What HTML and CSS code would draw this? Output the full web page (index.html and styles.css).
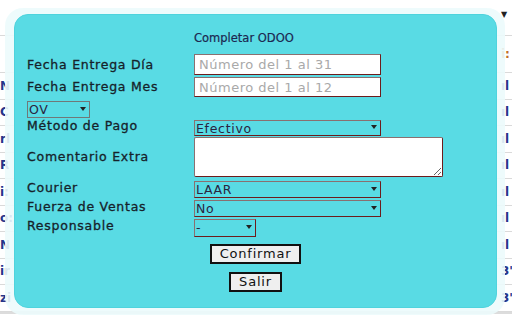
FILE: index.html
```html
<!DOCTYPE html>
<html lang="es">
<head>
    <meta charset="UTF-8">
    <title>Completar ODOO</title>
    <link rel="stylesheet" href="styles.css">
</head>
<body>
    <!-- Tabla de fondo (detrás del modal) -->
    <div class="page">
        <div class="row row-head"><span></span><span class="arrow">▼</span></div>
        <div class="row row-tall"><span></span><span class="orange">i:</span></div>
        <div class="row"><span>N</span><span>ıl</span></div>
        <div class="row"><span>C</span><span>ıl</span></div>
        <div class="row"><span>rl</span><span>ıl</span></div>
        <div class="row"><span>R</span><span>ıl</span></div>
        <div class="row"><span>i:</span><span>ıl</span></div>
        <div class="row"><span>o:</span><span>ıl</span></div>
        <div class="row"><span>N</span><span>ıl</span></div>
        <div class="row"><span>ir</span><span>3'</span></div>
        <div class="row"><span>zi</span><span>3'</span></div>
    </div>

    <!-- Modal -->
    <div class="modal">
        <div class="modal-box">
            <div class="form-grid">
                <div class="title">Completar ODOO</div>

                <label>Fecha Entrega Día</label>
                <input class="txt h21" type="text" placeholder="Número del 1 al 31">

                <label>Fecha Entrega Mes</label>
                <input class="txt h20" type="text" placeholder="Número del 1 al 12">

                <span class="sel sel-ov">
                    <select><option>OV</option></select>
                </span>
                <span></span>

                <label>Método de Pago</label>
                <span class="sel sel-wide h16">
                    <select><option>Efectivo</option></select>
                </span>

                <label>Comentario Extra</label>
                <textarea class="comment"></textarea>

                <label>Courier</label>
                <span class="sel sel-wide">
                    <select><option>LAAR</option></select>
                </span>

                <label>Fuerza de Ventas</label>
                <span class="sel sel-wide">
                    <select><option>No</option></select>
                </span>

                <label>Responsable</label>
                <span class="sel sel-small">
                    <select><option>-</option></select>
                </span>
            </div>

            <div class="actions">
                <button class="btn">Confirmar</button>
                <button class="btn">Salir</button>
            </div>
        </div>
    </div>
</body>
</html>
```

FILE: styles.css
```css
/* Estilos generales */
body {
    margin: 0;
    background: #fff;
    font-family: "DejaVu Sans", Verdana, sans-serif;
    width: 512px;
    height: 320px;
    overflow: hidden;
    position: relative;
}

/* Tabla de fondo */
.page {
    display: flex;
    flex-direction: column;
    border-bottom: 2px solid #dcdcdc;
}

.row {
    display: flex;
    justify-content: space-between;
    align-items: center;
    height: 26.5px;
    box-sizing: border-box;
    border-bottom: 1px solid #dadada;
    font-size: 12px;
    font-weight: bold;
    color: #26358a;
}

.row span:last-child {
    width: 11px;
    overflow: hidden;
    white-space: nowrap;
}

.row-head {
    height: 36px;
    align-items: flex-start;
}

.row-tall {
    height: 37px;
}

.arrow {
    font-size: 8px;
    color: #222;
    padding-top: 10px;
}

.orange {
    color: #c0702a;
}

/* Modal */
.modal {
    position: absolute;
    left: 5px;
    top: 8px;
    width: 500px;
    height: 307px;
    box-sizing: border-box;
    padding: 6px 8px 7px 9px;
    border-radius: 18px;
    background: rgba(236, 251, 252, 0.9);
}

.modal-box {
    height: 100%;
    box-sizing: border-box;
    background: #59dbe4;
    border: 1px solid #4fd3dd;
    border-radius: 14px;
    padding: 16px 12px 0 12px;
}

.form-grid {
    display: grid;
    grid-template-columns: 167px 1fr;
    row-gap: 2px;
    align-items: center;
}

.title {
    grid-column: 2;
    font-size: 11.5px;
    line-height: 15px;
    color: #1c2750;
    margin-bottom: 6px;
    -webkit-text-stroke: 0.2px #1c2750;
}

label {
    font-size: 12.5px;
    letter-spacing: 0.75px;
    color: #16222a;
    line-height: 14px;
    -webkit-text-stroke: 0.3px #16222a;
}

.txt {
    width: 187px;
    box-sizing: border-box;
    border: 1px solid;
    border-color: #8a7070 #6d1c1c #6d1c1c #8a7070;
    padding: 0 0 0 4px;
    font-family: "DejaVu Sans", sans-serif;
    font-size: 13px;
    letter-spacing: 0.5px;
    background: #fff;
    outline: none;
}

.txt::placeholder {
    color: #a9a9a9;
}

.h21 { height: 21px; }
.h20 { height: 20px; }

/* Selects con flecha */
.sel {
    position: relative;
    display: block;
    height: 17px;
}

.sel select {
    appearance: none;
    -webkit-appearance: none;
    width: 100%;
    height: 100%;
    box-sizing: border-box;
    background: transparent;
    border: 1px solid;
    border-color: #8a7070 #6d1c1c #6d1c1c #8a7070;
    border-radius: 0;
    padding: 0 0 0 1px;
    font-family: "DejaVu Sans", sans-serif;
    font-size: 12.5px;
    letter-spacing: 0.7px;
    color: #2a2440;
    outline: none;
}

.sel::after {
    content: "";
    position: absolute;
    right: 4px;
    top: 50%;
    margin-top: -1px;
    border-left: 3.5px solid transparent;
    border-right: 3.5px solid transparent;
    border-top: 4px solid #222;
}

.sel-wide { width: 187px; }
.h16 { height: 16px; }

.sel-ov {
    width: 63px;
}

.sel-ov select {
    border-color: #707878;
}

.sel-small {
    width: 62px;
    height: 18px;
}

.comment {
    width: 249px;
    height: 40px;
    box-sizing: border-box;
    margin-top: 1px;
    border: 1px solid;
    border-color: #8a7070 #6d1c1c #6d1c1c #8a7070;
    border-radius: 2px;
    background: #fff;
    resize: both;
    outline: none;
}

/* Botones */
.actions {
    display: flex;
    flex-direction: column;
    align-items: center;
    gap: 8px;
    margin-top: 9px;
}

.btn {
    height: 20px;
    box-sizing: border-box;
    border: 2px solid #111;
    background: #efefef;
    padding: 0 8px;
    font-family: "DejaVu Sans", sans-serif;
    font-size: 13px;
    letter-spacing: 0.8px;
    color: #111;
    line-height: 14px;
    border-radius: 0;
}
```
